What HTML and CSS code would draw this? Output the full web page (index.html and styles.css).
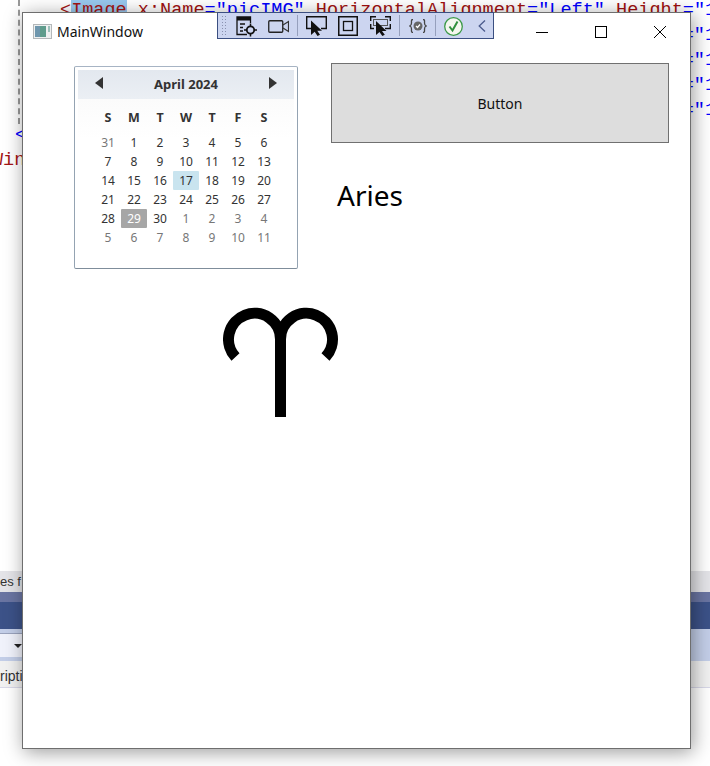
FILE: index.html

```html
<!DOCTYPE html>
<html lang="en">
<head>
  <meta charset="UTF-8">
  <title>MainWindow</title>
  <link rel="stylesheet" href="styles.css">
</head>
<body>
  <div class="ide">
    <div class="editor">
      <div class="dashes"></div>
      <div class="line first"><span class="tag">&lt;<mark>Image</mark></span> <span class="attr">x:Name</span><span class="val">="picIMG"</span> <span class="attr">HorizontalAlignment</span><span class="val">="Left"</span> <span class="attr">Height</span><span class="val">="1</span></div>
      <div class="line first"><span class="val">                                                        ="1</span></div>
      <div class="line first"><span class="val">                                                        ="1</span></div>
      <div class="line first"><span class="val">                                                        ="1</span></div>
      <div class="line first"><span class="val">                                                        ="1</span></div>
      <div class="line close"><span class="val">&lt;</span></div>
      <div class="line win"><span class="tag">Win</span></div>
    </div>
    <div class="band status"><span>es f</span></div>
    <div class="band title-band"></div>
    <div class="band combo-band">
      <div class="combo"><span class="combo-arrow"></span></div>
    </div>
    <div class="band desc"><span>ripti</span></div>
  </div>

  <div class="window">
    <div class="titlebar">
      <svg class="app-icon" width="19" height="15" viewBox="0 0 19 15">
        <rect x="0.5" y="0.5" width="18" height="14" fill="#eef0f0" stroke="#b4b8ba"/>
        <rect x="2" y="2" width="11" height="11" fill="#5f9c8c"/>
        <rect x="2" y="2" width="5" height="11" fill="#6f97ae"/>
        <rect x="15" y="2" width="2" height="6" fill="#9cc0ba"/>
      </svg>
      <span class="title">MainWindow</span>
      <div class="controls">
        <svg width="12" height="12" viewBox="0 0 12 12"><path d="M0 6.5H12" stroke="#000"/></svg>
        <svg width="12" height="12" viewBox="0 0 12 12"><rect x="0.5" y="0.5" width="11" height="11" fill="none" stroke="#000"/></svg>
        <svg width="12" height="12" viewBox="0 0 12 12"><path d="M0 0L12 12M12 0L0 12" stroke="#000" fill="none"/></svg>
      </div>
    </div>
    <div class="content">
      <div class="left-col">
        <div class="calendar">
          <div class="cal-head">
            <span class="arrow prev"></span>
            <span class="month">April 2024</span>
            <span class="arrow next"></span>
          </div>
          <div class="cal-body">
            <div class="days weekdays">
              <span>S</span><span>M</span><span>T</span><span>W</span><span>T</span><span>F</span><span>S</span>
            </div>
            <div class="days">
              <span class="other">31</span><span>1</span><span>2</span><span>3</span><span>4</span><span>5</span><span>6</span>
              <span>7</span><span>8</span><span>9</span><span>10</span><span>11</span><span>12</span><span>13</span>
              <span>14</span><span>15</span><span>16</span><span class="today">17</span><span>18</span><span>19</span><span>20</span>
              <span>21</span><span>22</span><span>23</span><span>24</span><span>25</span><span>26</span><span>27</span>
              <span>28</span><span class="picked">29</span><span>30</span><span class="other">1</span><span class="other">2</span><span class="other">3</span><span class="other">4</span>
              <span class="other">5</span><span class="other">6</span><span class="other">7</span><span class="other">8</span><span class="other">9</span><span class="other">10</span><span class="other">11</span>
            </div>
          </div>
        </div>
        <svg class="sign" width="116" height="110" viewBox="0 0 116 110">
          <path d="M12.5 50A26 26 0 1 1 57.5 32.5V110M57.5 32.5A26 26 0 1 1 102.5 50" fill="none" stroke="#000" stroke-width="11"/>
        </svg>
      </div>
      <div class="right-col">
        <button type="button" class="btn">Button</button>
        <div class="sign-name">Aries</div>
      </div>
    </div>
  </div>

  <div class="toolbar">
    <span class="grip"></span>
    <svg class="t1" width="21" height="21" viewBox="0 0 21 21">
      <path d="M11 18.500H1V1H14.500V7" fill="none" stroke="#111" stroke-width="1.300"/>
      <rect x="1" y="1" width="13.500" height="3.500" fill="#111"/>
      <path d="M4 8H9M4 11.500H7M4 15H7" stroke="#111" stroke-width="1.300"/>
      <circle cx="14.500" cy="14" r="3.700" fill="none" stroke="#111" stroke-width="1.800"/>
      <path d="M14.500 7.500V10.500M14.500 17.500V20.500M8 14H11M18 14H21" stroke="#111" stroke-width="1.500"/>
    </svg>
    <svg class="t2" width="21" height="13" viewBox="0 0 21 13">
      <rect x="0.750" y="0.750" width="14" height="11.500" rx="1" fill="none" stroke="#222" stroke-width="1.300"/>
      <path d="M15 5L20.500 1.500V11.500L15 8" fill="none" stroke="#333" stroke-width="1.200"/>
    </svg>
    <i class="sep s1"></i>
    <svg class="t3" width="21" height="20" viewBox="0 0 21 20">
      <path d="M5 12.500H.7V.7H20.300V12.500H15" fill="none" stroke="#111" stroke-width="1.400"/>
      <path d="M5 4.500V19L8.700 15.700L11.500 20L14 18.700L11.300 14.700H16Z" fill="#111"/>
    </svg>
    <svg class="t4" width="20" height="20" viewBox="0 0 20 20">
      <rect x="0.750" y="0.750" width="18.500" height="18.500" fill="none" stroke="#111" stroke-width="1.500"/>
      <rect x="5.500" y="5.500" width="9" height="9" fill="none" stroke="#111" stroke-width="1.300"/>
    </svg>
    <svg class="t5" width="21" height="20" viewBox="0 0 21 20">
      <path d="M.7 5V.7H6M15 .7H20.300V5M.7 8V12.500H4M20.300 8V12.500H15" fill="none" stroke="#111" stroke-width="1.400"/>
      <rect x="3.500" y="3.500" width="14" height="6" fill="none" stroke="#555"/>
      <path d="M6 5V19L9.500 16L12.300 20L14.800 18.700L12 15H16.500Z" fill="#111"/>
    </svg>
    <i class="sep s2"></i>
    <svg class="t6" width="18" height="14" viewBox="0 0 18 14">
      <path d="M4 .5C2 .5 2.500 2 2.500 4S2.500 6.500 .8 7C2.500 7.500 2.500 8 2.500 10S2 13.500 4 13.500M14 .5C16 .5 15.500 2 15.500 4S15.500 6.500 17.200 7C15.500 7.500 15.500 8 15.500 10S16 13.500 14 13.500" fill="none" stroke="#444" stroke-width="1.300"/>
      <circle cx="9" cy="7" r="4.500" fill="#666"/>
      <path d="M7 7L8.500 8.500L11 5.500" fill="none" stroke="#fff" stroke-width="1.200"/>
    </svg>
    <i class="sep s3"></i>
    <svg class="t7" width="19" height="19" viewBox="0 0 19 19">
      <circle cx="9.500" cy="9.500" r="8.800" fill="#f4f7ef" stroke="#3c9a48" stroke-width="1.300"/>
      <path d="M5.500 9.500L8.500 13.500L13.500 4.500" fill="none" stroke="#2f8f3c" stroke-width="2"/>
    </svg>
    <svg class="t8" width="8" height="12" viewBox="0 0 8 12">
      <path d="M7 .5L1.200 6L7 11.500" fill="none" stroke="#4a5a8c" stroke-width="1.300"/>
    </svg>
  </div>
</body>
</html>
```

FILE: styles.css

```css
html, body {
  margin: 0;
  height: 100%;
  overflow: hidden;
  background: #fff;
}
mark {
  background: #99c9ef;
  color: inherit;
}
.ide {
  display: flex;
  flex-direction: column;
  height: 766px;
  font-family: "Liberation Sans", Arial, sans-serif;
}
.editor {
  position: relative;
  height: 571px;
  box-sizing: border-box;
  overflow: hidden;
}
.dashes {
  position: absolute;
  left: 18px;
  top: 0;
  height: 124px;
  border-left: 2px dashed #999;
}
.line {
  height: 25px;
  line-height: 25px;
  font-family: "Liberation Mono", monospace;
  font-size: 18.55px;
  white-space: pre;
}
.line:nth-child(2) { margin-top: -2px; }
.first { padding-left: 60px; }
.close { padding-left: 15px; }
.win { margin-left: -8px; }
.tag { color: #a31515; }
.attr { color: #a01010; }
.val { color: #0000ff; }
.band {
  font-size: 14px;
  color: #333;
  white-space: nowrap;
  overflow: hidden;
  box-sizing: border-box;
}
.status {
  height: 21px;
  background: #e4e4e8;
  line-height: 22px;
  font-size: 13px;
}
.title-band {
  height: 37px;
  background: linear-gradient(#6a75a2 0, #6a75a2 10px, #3c5288 10px);
}
.combo-band {
  height: 32px;
  padding-top: 4px;
  background: #c3cee8;
}
.combo {
  position: relative;
  width: 30px;
  height: 23px;
  background: #f0f2fb;
  border-top: 1px solid #9aa3bd;
}
.combo-arrow {
  position: absolute;
  left: 14px;
  top: 10px;
  border: 4px solid transparent;
  border-top-color: #222;
}
.desc {
  height: 27px;
  line-height: 30px;
  background: #f1f1f1;
  border-bottom: 1px solid #d8d8e8;
}

.window {
  position: absolute;
  left: 22px;
  top: 12px;
  width: 667px;
  height: 735px;
  background: #fff;
  border: 1px solid #6e6e6e;
  box-shadow: 2px 3px 18px rgba(0,0,0,0.4);
  font-family: "Noto Sans", "Open Sans", sans-serif;
  color: #000;
}
.titlebar {
  display: flex;
  align-items: center;
  height: 37px;
  padding-left: 10px;
}
.app-icon { margin-right: 5px; }
.title {
  font-size: 14px;
  color: #111;
}
.controls {
  display: flex;
  gap: 47px;
  margin-left: auto;
  margin-right: 24px;
}
.content {
  display: flex;
}
.left-col {
  width: 308px;
  padding: 16px 0 0 51px;
  box-sizing: border-box;
}
.calendar {
  width: 224px;
  height: 203px;
  padding: 3px;
  box-sizing: border-box;
  border: 1px solid;
  border-color: #a7b4c4 #94a3b2 #7f8d9b;
  border-radius: 2px;
  background: #fff;
}
.cal-head {
  display: flex;
  align-items: center;
  justify-content: space-between;
  height: 29px;
  padding: 0 17px;
  background: linear-gradient(#e3e8ef, #ebeff4);
}
.month {
  margin-top: -2px;
  font-size: 13px;
  font-weight: bold;
  color: #333;
}
.arrow {
  border-top: 6.5px solid transparent;
  border-bottom: 6.5px solid transparent;
  margin-top: -3px;
}
.prev { border-right: 8px solid #333; }
.next { border-left: 8px solid #333; }
.cal-body {
  padding: 9px 17px 0;
  background: linear-gradient(#fbfbfb, #fff 40px);
}
.days {
  display: grid;
  grid-template-columns: repeat(7, 26px);
  grid-auto-rows: 19px;
  justify-content: center;
  font-size: 12px;
  color: #333;
  text-align: center;
  line-height: 19px;
}
.weekdays {
  font-size: 12.5px;
  font-weight: bold;
  margin-bottom: 6px;
}
.other { color: #777; }
.today {
  background: #c9e4ef;
  border-radius: 1px;
}
.picked {
  background: #a6a6a6;
  color: #fff;
  border-radius: 1px;
}
.sign {
  display: block;
  margin: 38px 0 0 149px;
}
.right-col {
  padding-top: 13px;
}
.btn {
  display: block;
  width: 338px;
  height: 80px;
  background: #dddddd;
  border: 1px solid #707070;
  font: inherit;
  font-size: 14px;
  color: #111;
}
.sign-name {
  margin: 32px 0 0 6px;
  font-size: 28px;
  line-height: 40px;
}

.toolbar {
  position: absolute;
  left: 217px;
  top: 12px;
  width: 275px;
  height: 25px;
  background: #ccd5f0;
  border: 1px solid #3b4f81;
}
.toolbar svg,
.toolbar .sep,
.grip {
  position: absolute;
}
.grip {
  left: 3px;
  top: 2px;
  width: 7px;
  height: 22px;
  background-image: radial-gradient(circle, #8a92b0 1px, transparent 1px);
  background-size: 3px 3px;
}
.sep {
  top: 2px;
  width: 1px;
  height: 21px;
  background: #96a0bd;
}
.s1 { left: 79px; }
.s2 { left: 181px; }
.s3 { left: 217px; }
.t1 { left: 18px; top: 3px; }
.t2 { left: 50px; top: 7px; }
.t3 { left: 88px; top: 3px; }
.t4 { left: 120px; top: 3px; }
.t5 { left: 152px; top: 3px; }
.t6 { left: 191px; top: 6px; }
.t7 { left: 226px; top: 4px; }
.t8 { left: 260px; top: 7px; }
```
